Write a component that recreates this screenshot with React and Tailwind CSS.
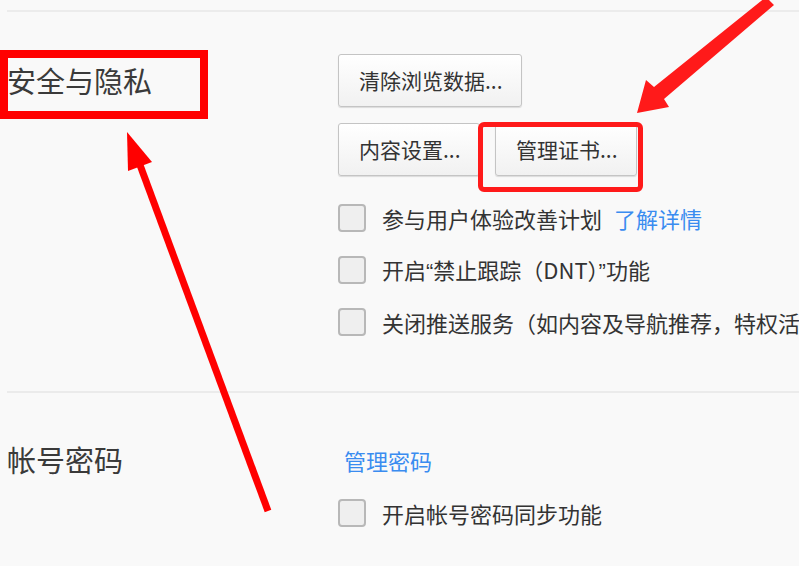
import React from "react";

const font = { fontFamily: '"Noto Sans CJK SC", "Noto Sans", sans-serif' };
const latin = { fontFamily: '"Liberation Sans", sans-serif' };

function Btn({ w, children }) {
  return (
    <div
      className={`h-[53px] ${w} flex items-center pl-[20px] border border-[#c4c4c4] rounded-[3px] bg-gradient-to-b from-[#ffffff] to-[#f1f1f1] shadow-[0_1px_1px_rgba(0,0,0,0.12)] text-[21px] text-[#333] whitespace-nowrap`}
    >
      {children}
    </div>
  );
}

function Check({ children }) {
  return (
    <div className="flex items-center h-[28px] whitespace-nowrap">
      <div className="w-[28px] h-[28px] shrink-0 border-2 border-[#b8b8b8] rounded-[4px] bg-[#efefef]" />
      <div className="ml-[16px] text-[22px] leading-[28px] text-[#333]">{children}</div>
    </div>
  );
}

export default function App() {
  return (
    <div
      className="relative w-[799px] h-[566px] overflow-hidden bg-[#f9f9f9] pt-[10px]"
      style={font}
    >
      <div className="ml-[7px] h-[2px] bg-[#ececec]" />

      {/* Section 1 */}
      <div className="flex mt-[42px]">
        <div className="w-[338px] shrink-0 pl-[7px]">
          <div className="h-[53px] flex items-center text-[29px] text-[#3a3a3a]">安全与隐私</div>
        </div>
        <div className="flex flex-col">
          <Btn w="w-[184px]">清除浏览数据...</Btn>
          <div className="flex mt-[16px] gap-[15px]">
            <Btn w="w-[142px]">内容设置...</Btn>
            <Btn w="w-[142px]">管理证书...</Btn>
          </div>
          <div className="flex flex-col gap-[24px] mt-[28px]">
            <Check>
              参与用户体验改善计划<span className="ml-[12px] text-[#3a8cf0]">了解详情</span>
            </Check>
            <Check>
              开启<span style={latin}>“</span>禁止跟踪（DNT）<span style={latin}>”</span>功能
            </Check>
            <Check>关闭推送服务（如内容及导航推荐，特权活动等）</Check>
          </div>
        </div>
      </div>

      <div className="ml-[7px] mt-[55px] h-[2px] bg-[#ebebeb]" />

      {/* Section 2 */}
      <div className="flex mt-[51px]">
        <div className="w-[338px] shrink-0 pl-[7px]">
          <div className="h-[32px] flex items-center text-[29px] text-[#3a3a3a]">帐号密码</div>
        </div>
        <div className="flex flex-col">
          <div className="h-[32px] flex items-center pl-[6px] text-[22px] text-[#3a8cf0]">管理密码</div>
          <div className="mt-[23px]">
            <Check>开启帐号密码同步功能</Check>
          </div>
        </div>
      </div>

      {/* Annotation overlays */}
      <div className="absolute left-0 top-[50px] w-[208px] h-[69px] border-[8px] border-[#ff0000]" />
      <div className="absolute left-[478px] top-[122px] w-[165px] h-[70px] border-[5px] border-[#ff1a1a] rounded-[6px]" />
      <svg className="absolute left-0 top-0" width="799" height="566" viewBox="0 0 799 566">
        <line x1="140" y1="165" x2="268" y2="511" stroke="#ff0000" strokeWidth="7" />
        <polygon points="127,132 152,162 128,171" fill="#ff0000" />
        <polygon
          points="637,113 646,80 654,87 766,-3 774,5 664,99 669,107"
          fill="#ff1a1a"
        />
      </svg>
    </div>
  );
}
